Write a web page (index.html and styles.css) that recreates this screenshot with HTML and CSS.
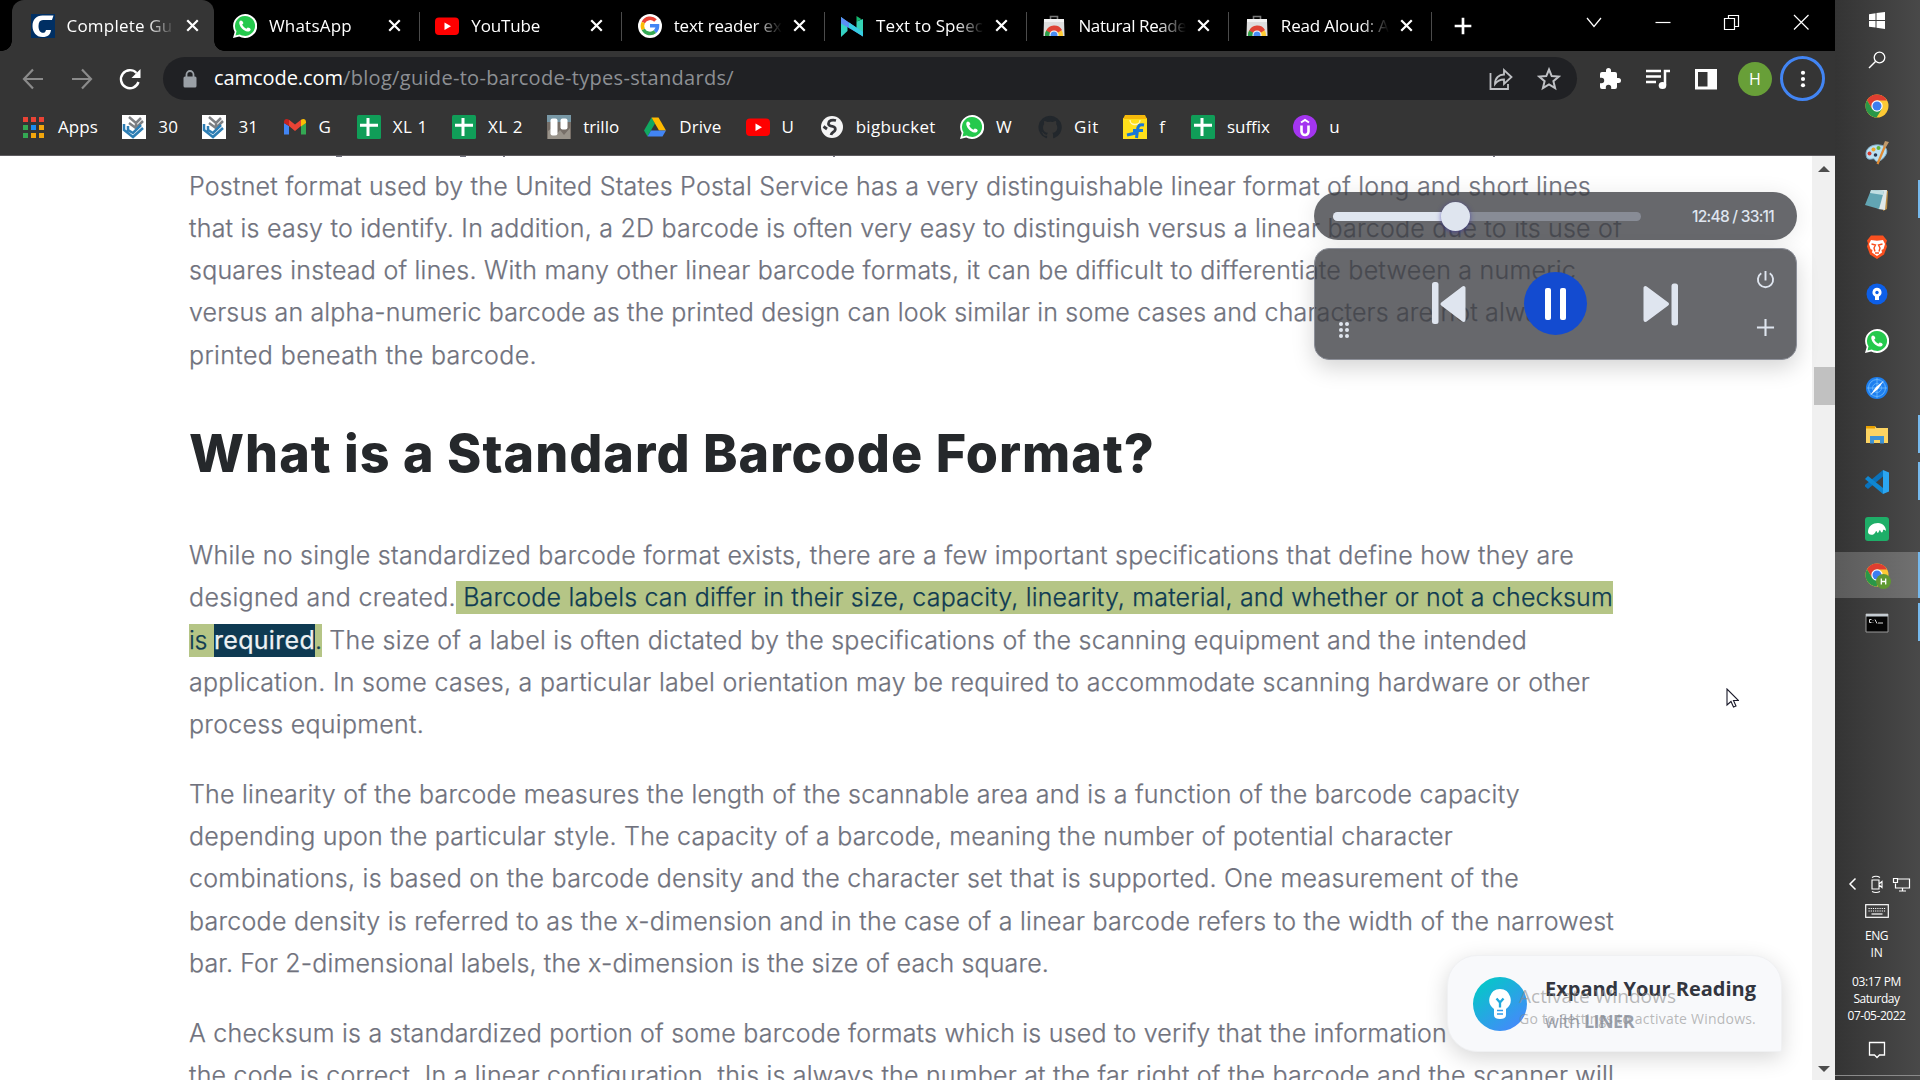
FILE: index.html
```html
<!DOCTYPE html>
<html lang="en">
<head>
<meta charset="utf-8">
<title>Complete Guide to Barcode Types</title>
<link rel="stylesheet" href="styles.css">
</head>
<body>
<svg class="defs" width="0" height="0">
  <symbol id="whatsapp" viewBox="0 0 24 24"><path d="M12 0a12 12 0 0 0-10.300 18L0 24l6.200-1.600A12 12 0 1 0 12 0z" fill="#fff"/><path d="M12 1.900a10 10 0 0 0-8.500 15.300L2.500 21.500l4.300-1.100A10 10 0 1 0 12 1.900z" fill="#25c94d"/><path d="M8 6.500c-1 0-2 1.300-1.700 3 .5 3.500 4.500 7.500 8 8 1.800.2 3.400-.9 3.400-2.300 0-.8-2.500-2-3-1.700l-1.200 1.300c-1.800-.6-3.700-2.400-4.300-4.200l1.100-1.200c.3-.5-.8-2.900-2.300-2.900z" fill="#fff"/></symbol>
  <symbol id="youtube" viewBox="0 0 24 24"><rect y="3.500" width="24" height="17.500" rx="4" fill="#f00"/><path d="M9.500 8.500v7.500l6.500-3.750z" fill="#fff"/></symbol>
  <symbol id="store" viewBox="0 0 24 24"><path d="M8.500 6V2.500h7V6" fill="none" stroke="#777" stroke-width="1.600"/><path d="M2 5h20l.5 17h-21z" fill="#dedede"/><path d="M2 5h20v3H2z" fill="#f2f2f2"/><clipPath id="bag"><path d="M1 5h22v17H1z"/></clipPath><g clip-path="url(#bag)"><circle cx="12" cy="21" r="9" fill="#fc3"/><path d="M12 21L4 17a9 9 0 0 1 16-1z" fill="#df4436"/><path d="M12 21L4.200 16.500A9 9 0 0 0 4 25z" fill="#2a9d4a"/><circle cx="12" cy="21" r="4.500" fill="#fff"/><circle cx="12" cy="21" r="3.500" fill="#4a8df5"/></g></symbol>
  <symbol id="chrome" viewBox="0 0 24 24"><circle cx="12" cy="12" r="11.500" fill="#fcc934"/><path d="M2 6.300A11.500 11.500 0 0 1 22 6.500H12L7 14.800z" fill="#df3e30"/><path d="M2 6.300A11.500 11.500 0 0 0 11.500 23.500L17 14.700 7.200 14.900z" fill="#2a9748"/><circle cx="12" cy="12" r="5.700" fill="#fff"/><circle cx="12" cy="12" r="4.500" fill="#3c7df0"/></symbol>
  <symbol id="sheet" viewBox="0 0 24 24"><rect width="24" height="24" rx="1.500" fill="#109d58"/><path d="M3 10.300h18M11 3v18" stroke="#fff" stroke-width="3"/></symbol>
  <symbol id="hand" viewBox="0 0 24 24"><path d="M0 0h24v24H0z" fill="#fff"/><path d="M7 2l7 6v5M7 8l7 5 7-7M14 8l5-5" fill="none" stroke="#7d7f82" stroke-width="2.500"/><path d="M2 9v6l9 7 10-9M6 11v4l5 3 8-8" fill="none" stroke="#2d7eb4" stroke-width="2.500"/></symbol>
  <symbol id="x" viewBox="0 0 24 24"><path d="M6.500 6.500l11 11m0-11l-11 11" stroke="currentColor" stroke-width="2.300"/></symbol>
</svg>

<div class="browser">
  <header class="tabs">
    <div class="tab active"><svg class="ico" viewBox="0 0 24 24"><path d="M0 0h24v24H0z" fill="#002f63"/><path d="M22.500 1.500h-11C5 1.500 1.500 6 1.500 12s3.500 11 10 11c5.500 0 8-2.500 8.500-7h-5c-.5 2-1.500 2.800-3 2.800-2.800 0-4.500-2.800-4.500-6.800 0-4 1.500-6 4.500-6H21z" fill="#fff"/></svg><span class="title"><b data-w="106">Complete Gu</b></span><svg class="x"><use href="#x"/></svg></div>
    <div class="tab"><svg class="ico"><use href="#whatsapp"/></svg><span class="title"><b data-w="83">WhatsApp</b></span><svg class="x"><use href="#x"/></svg></div>
    <div class="tab"><svg class="ico"><use href="#youtube"/></svg><span class="title"><b data-w="69">YouTube</b></span><svg class="x"><use href="#x"/></svg></div>
    <div class="tab"><svg class="ico" viewBox="0 0 24 24"><circle cx="12" cy="12" r="12" fill="#fff"/><g fill="none" stroke-width="3.600"><path d="M17.500 6.500A7.600 7.600 0 0 0 5.300 8.500" stroke="#ea4335"/><path d="M5.300 8.500a7.600 7.600 0 0 0 0 7" stroke="#fbbc05"/><path d="M5.300 15.500A7.600 7.600 0 0 0 17 17.600" stroke="#34a853"/><path d="M17 17.600a7.600 7.600 0 0 0 2.500-5.800H12" stroke="#4285f4"/></g></svg><span class="title"><b data-w="108">text reader ex</b></span><svg class="x"><use href="#x"/></svg></div>
    <div class="tab"><svg class="ico" viewBox="0 0 24 24"><path d="M1 3l6.500 5v9L1 23z" fill="#35d3c4"/><path d="M16.500 7.500L23 5v17l-6.500-5z" fill="#35d3b4"/><path d="M1 3l22 15v4.500L14 17 1 9.500z" fill="#5b8ff5"/><path d="M9 8.500L23 18v4.500l-14-9z" fill="#35cfe0"/><path d="M16.500 2l5 3.200-5 2.500z" fill="#15b86e"/></svg><span class="title"><b data-w="107">Text to Speec</b></span><svg class="x"><use href="#x"/></svg></div>
    <div class="tab"><svg class="ico"><use href="#store"/></svg><span class="title"><b data-w="108">Natural Reade</b></span><svg class="x"><use href="#x"/></svg></div>
    <div class="tab"><svg class="ico"><use href="#store"/></svg><span class="title"><b data-w="108">Read Aloud: A</b></span><svg class="x"><use href="#x"/></svg></div>
    <svg class="plus" viewBox="0 0 24 24"><path d="M12 2v20M2 12h20" stroke="#fff" stroke-width="3.200"/></svg>
    <div class="winctl">
      <svg viewBox="0 0 24 24"><path d="M5 8l7 8.500L19 8" fill="none" stroke="#fff" stroke-width="1.200"/></svg>
      <svg viewBox="0 0 24 24"><path d="M4.500 12.500h15" stroke="#fff" stroke-width="1.200"/></svg>
      <svg viewBox="0 0 24 24"><path d="M4.500 8.500h10v11h-10zM8.500 8V5.500h10v11H15" fill="none" stroke="#fff" stroke-width="1.200"/></svg>
      <svg viewBox="0 0 24 24"><path d="M5 5l14.500 14.500m0-14.500L5 19.500" stroke="#fff" stroke-width="1.200"/></svg>
    </div>
  </header>

  <nav class="toolbar">
    <svg class="nav dim" viewBox="0 0 24 24"><path d="M22 12H3M12 2.500L3 12l9 9.500" fill="none" stroke="currentColor" stroke-width="2.200"/></svg>
    <svg class="nav dim" viewBox="0 0 24 24"><path d="M2 12h19M12 2.500l9 9.500-9 9.500" fill="none" stroke="currentColor" stroke-width="2.200"/></svg>
    <svg class="nav" viewBox="0 0 24 24"><path d="M20.500 15A9 9 0 1 1 18.500 6" fill="none" stroke="currentColor" stroke-width="2.400"/><path d="M22.500 2v9h-9z" fill="currentColor"/></svg>
    <div class="omnibox">
      <svg class="lock" viewBox="0 0 14 18"><rect x="0.500" y="6.500" width="13" height="11" rx="1.500" fill="#9aa0a6"/><path d="M3.500 7V4.500a3.500 3.500 0 0 1 7 0V7" fill="none" stroke="#9aa0a6" stroke-width="1.800"/></svg>
      <span class="url"><b data-w="129">camcode.com</b><i data-w="391">/blog/guide-to-barcode-types-standards/</i></span>
      <svg class="act" viewBox="0 0 24 24"><path d="M1.500 6v16h17.500v-5" fill="none" stroke="currentColor" stroke-width="1.800"/><path d="M6 17c0-6 4-9.500 9-9.500V3l7.500 7-7.500 7v-4.500c-4 0-6.500 1-9 4.500z" fill="none" stroke="currentColor" stroke-width="1.800"/></svg>
      <svg class="act" viewBox="0 0 24 24"><path d="M12 2.500l2.700 6.600 7.100.5-5.400 4.600 1.700 7L12 17.400l-6.100 3.800 1.700-7L2.200 9.600l7.100-.5z" fill="none" stroke="currentColor" stroke-width="2"/></svg>
    </div>
    <svg class="ext" viewBox="0 0 24 24"><path d="M20.500 11H19V7a2 2 0 0 0-2-2h-4V3.500a2.500 2.500 0 0 0-5 0V5H4a2 2 0 0 0-2 2v3.800h1.500a2.700 2.700 0 0 1 0 5.400H2V20a2 2 0 0 0 2 2h3.800v-1.500a2.700 2.700 0 0 1 5.400 0V22H17a2 2 0 0 0 2-2v-4h1.500a2.500 2.500 0 0 0 0-5z" fill="#fff"/></svg>
    <svg class="ext" viewBox="0 0 24 24"><path d="M0 4h15M0 9.500h15M0 15h10" stroke="#fff" stroke-width="2.300"/><path d="M19 18V4h5" fill="none" stroke="#fff" stroke-width="2.500"/><ellipse cx="16.500" cy="18.500" rx="3.800" ry="3.500" fill="#fff"/></svg>
    <svg class="ext" viewBox="0 0 24 24"><path d="M1 2h22v20.500H1zM4 5v14.500h9.500V5z" fill="#fff" fill-rule="evenodd"/></svg>
    <span class="avatar">H</span>
    <span class="menu"><svg viewBox="0 0 24 24"><g fill="#fff"><circle cx="12" cy="4.500" r="2.500"/><circle cx="12" cy="12" r="2.500"/><circle cx="12" cy="19.500" r="2.500"/></g></svg></span>
  </nav>

  <nav class="bookmarks">
    <a><svg viewBox="0 0 24 24"><path d="M1 2h5v5H1zm8 0h5v5H9zm8 0h5v5h-5z" fill="#ea4335"/><path d="M1 10h5v5H1z" fill="#34a853"/><path d="M9 10h5v5H9z" fill="#1a8cf0"/><path d="M17 10h5v5h-5zM9 18h5v5H9zm8 0h5v5h-5z" fill="#f2a60c"/><path d="M1 18h5v5H1z" fill="#34a853"/></svg><b data-w="40">Apps</b></a>
    <a><svg><use href="#hand"/></svg><b data-w="20">30</b></a>
    <a><svg><use href="#hand"/></svg><b data-w="20">31</b></a>
    <a><svg viewBox="0 0 24 24"><path d="M1 8v11.500h5V11z" fill="#4285f4"/><path d="M18 11v8.500h5V8z" fill="#34a853"/><path d="M1 7c0-3 2.500-4 5-2.200V11L1 8z" fill="#c5221f"/><path d="M6 4.800l6 4.700 6-4.700V11l-6 5-6-5z" fill="#ea4335"/><path d="M18 4.800C20.500 3 23 4 23 7v1l-5 3.500z" fill="#fbbc04"/></svg><b data-w="14">G</b></a>
    <a><svg><use href="#sheet"/></svg><b data-w="35">XL 1</b></a>
    <a><svg><use href="#sheet"/></svg><b data-w="35">XL 2</b></a>
    <a><svg viewBox="0 0 24 24"><path d="M0 0h24v24H0z" fill="#776f68"/><path d="M0 0h24v7H0z" fill="#7898a6"/><path d="M1 16l4-3 3 8 5-6 4 5 6-7v11H1z" fill="#99938a"/><rect x="3.500" y="3.500" width="7" height="17" rx="2" fill="#fff"/><rect x="13.500" y="3.500" width="7" height="11" rx="2" fill="#fff"/></svg><b data-w="36">trillo</b></a>
    <a><svg viewBox="0 0 24 24"><path d="M8.500 2.500L1 15.500l3.500 6L12 8.500z" fill="#11a861"/><path d="M8.500 2.500h7L23 15.500h-7z" fill="#ffba00"/><path d="M8 15.500h15l-3.500 6h-15z" fill="#4285f4"/></svg><b data-w="42">Drive</b></a>
    <a><svg><use href="#youtube"/></svg><b data-w="14">U</b></a>
    <a><svg viewBox="0 0 24 24"><circle cx="12" cy="12" r="11" fill="#f5f5f5"/><path d="M16 5.500c-4-1-7 0-7.500 2.500-.5 2 1.500 3 4 3.300 3 .5 3.500 3 2 4.700-1.500 1.500-3 2-3.500 4M3.500 11.500l3.500 2.500" fill="none" stroke="#35363a" stroke-width="2.800"/></svg><b data-w="80">bigbucket</b></a>
    <a><svg><use href="#whatsapp"/></svg><b data-w="18">W</b></a>
    <a><svg viewBox="0 0 24 24"><path d="M12 .8a11.500 11.500 0 0 0-3.700 22.400c.6.100.8-.2.800-.5v-2c-3.200.6-4-1.500-4.400-2.300-.4-.7-.8-1-1.400-1.400 1.500-.4 2.300 1 2.700 1.600 1 1.500 2.400 1.200 3.200.8.100-.8.500-1.300.8-1.600C7.300 17.500 5 16.300 5 12.200c0-1.300.4-2.300 1.200-3.200-.1-.3-.5-1.500.1-3.100 0 0 1-.3 3.100 1.200a11 11 0 0 1 5.500 0C17 5.600 18 5.900 18 5.900c.6 1.600.2 2.800.1 3.100.8.800 1.200 1.900 1.200 3.200 0 4.200-2.500 5.300-5 5.600.4.300.8 1 .8 2.100v2.800c0 .3.200.6.800.5A11.500 11.500 0 0 0 12 .8z" fill="#22272c"/></svg><b data-w="25">Git</b></a>
    <a><svg viewBox="0 0 24 24"><path d="M0 3h24v21H0z" fill="#ffe01b"/><path d="M2 0h20l2 4H0z" fill="#f5b90a"/><path d="M7 5c0 6 10 6 10 0" fill="none" stroke="#fff7c0" stroke-width="1.300"/><path d="M21 10c-5-1-6 1-6.500 5l-1 8M10 15.500h10M4 20l9-2" fill="none" stroke="#1877d8" stroke-width="3"/></svg><b data-w="7.500">f</b></a>
    <a><svg><use href="#sheet"/></svg><b data-w="43">suffix</b></a>
    <a class="last"><svg viewBox="0 0 24 24"><circle cx="12" cy="12" r="12" fill="#a435f0"/><path d="M8 7.500l4-2.500 4 2.500" fill="none" stroke="#fff" stroke-width="2"/><path d="M8.500 10.500v6a3.500 3.500 0 0 0 7 0v-6" fill="none" stroke="#fff" stroke-width="2.600"/></svg><b data-w="10">u</b></a>
  </nav>

  <div class="view">
    <main class="article">
      <div class="scrolled"></div>
      <p>
        <span class="line" data-w="1402">Postnet format used by the United States Postal Service has a very distinguishable linear format of long and short lines</span>
        <span class="line" data-w="1433">that is easy to identify. In addition, a 2D barcode is often very easy to distinguish versus a linear barcode due to its use of</span>
        <span class="line" data-w="1387">squares instead of lines. With many other linear barcode formats, it can be difficult to differentiate between a numeric</span>
        <span class="line" data-w="1377">versus an alpha-numeric barcode as the printed design can look similar in some cases and characters are not always</span>
        <span class="line" data-w="348">printed beneath the barcode.</span>
      </p>
      <h2><span data-w="966">What is a Standard Barcode Format?</span></h2>
      <p>
        <span class="line" data-w="1385">While no single standardized barcode format exists, there are a few important specifications that define how they are</span>
        <span class="line"><span data-w="267">designed and created.</span><mark data-w="1157"> Barcode labels can differ in their size, capacity, linearity, material, and whether or not a checksum</mark></span>
        <span class="line"><mark data-w="25">is </mark><mark class="word" data-w="101">required</mark><mark data-w="7">.</mark><span data-w="1205"> The size of a label is often dictated by the specifications of the scanning equipment and the intended</span></span>
        <span class="line" data-w="1401">application. In some cases, a particular label orientation may be required to accommodate scanning hardware or other</span>
        <span class="line" data-w="235">process equipment.</span>
      </p>
      <p>
        <span class="line" data-w="1331">The linearity of the barcode measures the length of the scannable area and is a function of the barcode capacity</span>
        <span class="line" data-w="1264">depending upon the particular style. The capacity of a barcode, meaning the number of potential character</span>
        <span class="line" data-w="1330">combinations, is based on the barcode density and the character set that is supported. One measurement of the</span>
        <span class="line" data-w="1425">barcode density is referred to as the x-dimension and in the case of a linear barcode refers to the width of the narrowest</span>
        <span class="line" data-w="860">bar. For 2-dimensional labels, the x-dimension is the size of each square.</span>
      </p>
      <p>
        <span class="line" data-w="1258">A checksum is a standardized portion of some barcode formats which is used to verify that the information</span>
        <span class="line" data-w="1425">the code is correct. In a linear configuration, this is always the number at the far right of the barcode and the scanner will</span>
      </p>
    </main>
    <aside class="scrollbar"><i class="up"></i><i class="thumb"></i><i class="down"></i></aside>
  </div>
</div>

<aside class="taskbar">
  <div class="apps">
    <span class="app short"><svg viewBox="0 0 24 24"><path d="M4 6.200l6.500-.9V12H4zM11.500 5.100L20 4v8h-8.500zM4 13h6.500v6.600L4 18.700zM11.500 13H20v7.900l-8.500-1.200z" fill="#fff"/></svg></span>
    <span class="app short2"><svg viewBox="0 0 24 24"><circle cx="14.500" cy="9.500" r="5.300" fill="none" stroke="#fff" stroke-width="1.300"/><path d="M10.500 13.500L4 20" stroke="#fff" stroke-width="1.500"/></svg></span>
    <span class="app"><svg><use href="#chrome"/></svg></span>
    <span class="app"><svg viewBox="0 0 24 24"><path d="M2 17C-2 8 7 3 14 4c7 0 10 6 6 11-3 5-9 7-10 4s-5 1-8-2z" fill="#b9dff2" stroke="#7eaec9"/><circle cx="4.500" cy="12.500" r="2" fill="#d53a30"/><circle cx="8.500" cy="8.500" r="2" fill="#eda52c"/><circle cx="13.500" cy="7" r="2" fill="#5fb339"/><circle cx="10.500" cy="14" r="1.800" fill="#28364f"/><path d="M12.500 23L20 5" stroke="#e08b34" stroke-width="2.200"/><path d="M18 5l2-5 4 1-3 5z" fill="#c19a6b"/></svg></span>
    <span class="app run"><svg viewBox="0 0 24 24"><path d="M20 2l3 1-1 18-4 2z" fill="#b98d45"/><path d="M7 2h15l-2 20-7-1z" fill="#dfe8e8"/><path d="M6 2l13 1-5 18-14-4z" fill="#62a5b3"/><path d="M6 2l13 1-1 4-13-2z" fill="#c1dee2"/></svg></span>
    <span class="app"><svg viewBox="0 0 24 24"><path d="M6 .5h12l4 5-1 3 1 3-3 8-7 4.500-7-4.500-3-8 1-3-1-3z" fill="#f9501f"/><path d="M6 5l6 .8L18 5l2 4-1.500 5-2 1 .5 2.500-5 3.500-5-3.500.5-2.500-2-1L4 9z" fill="#fff"/><path d="M6.500 9l4 1-1.500 3 1 3.500M17.500 9l-4 1 1.500 3-1 3.500M10 18h4" fill="none" stroke="#f9501f" stroke-width="1.400"/></svg></span>
    <span class="app"><svg viewBox="0 0 24 24"><circle cx="12" cy="12" r="10.500" fill="#0d5fe8"/><path d="M12 5.800a4.600 4.600 0 0 0-2 8.700V18h4v-3.500a4.600 4.600 0 0 0-2-8.700z" fill="#fff"/><circle cx="12" cy="10.500" r="1.700" fill="#0d5fe8"/></svg></span>
    <span class="app"><svg><use href="#whatsapp"/></svg></span>
    <span class="app"><svg viewBox="0 0 24 24"><circle cx="12" cy="12" r="11" fill="#1d7ff0"/><g fill="none" stroke="#62b2fb"><circle cx="12" cy="12" r="8.500"/><circle cx="12" cy="12" r="4.500"/><path d="M12 2v20M2 12h20"/></g><path d="M19 4.500l-6 8.500L5 19.500 11 11z" fill="#fff"/></svg></span>
    <span class="app run"><svg viewBox="0 0 24 24"><path d="M1 3h9l1.500 2H23v15H1z" fill="#fcd462"/><path d="M1 3h9v2.500H1z" fill="#e8a000"/><path d="M5 20.500V13h14v7.500h-4V17H9v3.500z" fill="#3f93d4"/></svg></span>
    <span class="app run"><svg viewBox="0 0 24 24"><path d="M18 0v6.500L3 19 0 16.500V15z" fill="#0a72bb"/><path d="M0 9l3-3 15 12v6z" fill="#0f87d2"/><path d="M18 0l6 2.500v19L18 24z" fill="#2ba6f2"/></svg></span>
    <span class="app"><svg viewBox="0 0 24 24"><rect width="24" height="24" rx="3" fill="#1eae68"/><path d="M3 15C3 9 8 6 13 6s8 4 8 8c-1-1-2-1.500-3-1 0 2-1 3-2 2l-1-2c-1 0-1 3-2.500 3l-1-2c-1 0-1 2-2.500 3-3 2-6 0-6-2z" fill="#fff"/></svg></span>
    <span class="app run current"><svg viewBox="0 0 26 26"><use href="#chrome" width="24" height="24"/><circle cx="18.500" cy="18.500" r="7.500" fill="#5f9832"/><path d="M16.300 15.500v6M20.700 15.500v6M16.300 18.500h4.400" stroke="#fff" stroke-width="1.300"/></svg></span>
    <span class="app run"><svg viewBox="0 0 24 24"><path d="M1 3h22v18H1z" fill="#050505" stroke="#9a9a9a"/><path d="M1 3h22v2.500H1z" fill="#c5ccd2"/><path d="M6.500 8.500h-2v3h2M8 9v.5m0 2v.5M10 8.500l2 4M13 12h5" fill="none" stroke="#ddd"/></svg></span>
  </div>
  <div class="tray">
    <div class="trayrow">
      <svg viewBox="0 0 20 20"><path d="M12.500 4.500L7 10l5.500 5.500" fill="none" stroke="#fff" stroke-width="1.500"/></svg>
      <svg viewBox="0 0 20 20"><path d="M5 6h7v9H5zM12 10l3-2.500v6L12 11zM5 3.500q4-2.500 8 0M5 17.500q4 2 8 0" fill="none" stroke="#fff" stroke-width="1.100"/></svg>
      <svg viewBox="0 0 20 20"><path d="M6 5h12.500v9H4.500V9.500M2.500 4.500h4v4h-4zM11.500 14v3M8 17h7" fill="none" stroke="#fff" stroke-width="1.200"/></svg>
    </div>
    <svg class="kbd" viewBox="0 0 24 14"><rect x=".7" y=".7" width="22.600" height="12.600" fill="none" stroke="#fff" stroke-width="1.200"/><path d="M3.500 4.500h17M3.500 7h17" stroke="#fff" stroke-width="1.200" stroke-dasharray="1.200 1"/><path d="M6.500 10h11" stroke="#fff" stroke-width="1.200"/></svg>
    <div class="lang"><b data-w="23">ENG</b><b data-w="12">IN</b></div>
    <div class="clock"><b data-w="49">03:17 PM</b><b data-w="46">Saturday</b><b data-w="58">07-05-2022</b></div>
    <svg class="note" viewBox="0 0 18 18"><path d="M1.500 1.500h15v12.500h-5L9 16.500 6.500 14h-5z" fill="none" stroke="#fff" stroke-width="1.300"/></svg>
    <div class="peek"></div>
  </div>
</aside>

<section class="player">
  <div class="seek">
    <div class="track"><div class="played"></div><div class="knob"></div></div>
    <span class="time" data-w="82">12:48 / 33:11</span>
  </div>
  <div class="controls">
    <svg class="grip" viewBox="0 0 12 18"><g fill="#dfe5ef"><circle cx="3" cy="3" r="2"/><circle cx="9" cy="3" r="2"/><circle cx="3" cy="9" r="2"/><circle cx="9" cy="9" r="2"/><circle cx="3" cy="15" r="2"/><circle cx="9" cy="15" r="2"/></g></svg>
    <svg class="skip" viewBox="0 0 34 44"><rect width="6.500" height="42" y="0" rx="2.500" fill="#dfe5ef"/><path d="M10.500 22L31.500 6v32z" fill="#dfe5ef" stroke="#dfe5ef" stroke-width="4" stroke-linejoin="round"/></svg>
    <span class="pause"><i></i><i></i></span>
    <svg class="skip next" viewBox="0 0 36 44"><rect x="28.500" width="6.500" height="42" y="1.500" rx="2.500" fill="#dfe5ef"/><path d="M24 22L2.500 6v32z" fill="#dfe5ef" stroke="#dfe5ef" stroke-width="4" stroke-linejoin="round"/></svg>
    <div class="side">
      <svg viewBox="0 0 20 20"><path d="M5.500 3.500a8 8 0 1 0 9 0M10 1v10" fill="none" stroke="#dfe5ef" stroke-width="2"/></svg>
      <svg viewBox="0 0 20 20"><path d="M10 1v18M1 10h18" stroke="#dfe5ef" stroke-width="2.200"/></svg>
    </div>
  </div>
</section>

<section class="liner">
  <svg class="bulb" viewBox="0 0 54 54"><defs><linearGradient id="lg" x1="0.100" y1="0" x2="0.900" y2="1"><stop offset="0" stop-color="#00ccc4"/><stop offset="1" stop-color="#4a84ff"/></linearGradient></defs><circle cx="27" cy="27" r="27" fill="url(#lg)"/><path d="M27 12a11 11 0 0 0-6 20v6q0 4 6 4t6-4v-6a11 11 0 0 0-6-20z" fill="#fff"/><path d="M23.500 21.500l3.500 4 3.500-4M27 25v5.500" fill="none" stroke="#1fa9dd" stroke-width="2.300"/><path d="M24 33.500h6M24 37h6" stroke="#2f9cec" stroke-width="1.300"/></svg>
  <div class="promo"><b data-w="211">Expand Your Reading</b><span><i data-w="39">with </i><strong data-w="50">LINER</strong></span></div>
</section>

<div class="watermark"><span class="w1" data-w="157">Activate Windows</span><span class="w2" data-w="237">Go to Settings to activate Windows.</span></div>

<svg class="cursor" viewBox="0 0 13 20"><path d="M1 1v16l4-3.500 2.500 5.500 2.500-1-2.500-5.500h5z" fill="#fff" stroke="#1a1a2a" stroke-width="1.100"/></svg>
<script src="fit.js"></script>
</body>
</html>
```
FILE: styles.css
```css
* { box-sizing: border-box; }
body { margin: 0; width: 1920px; height: 1080px; overflow: hidden; display: flex; background: #fff; font-family: "Open Sans", "Noto Sans", sans-serif; position: relative; }
b, i { font-weight: 400; font-style: normal; }
[data-w] { white-space: pre; }
svg { flex: none; display: block; }
.defs { position: absolute; }

.browser { width: 1835px; height: 1080px; display: flex; flex-direction: column; flex: none; }

/* tab strip */
.tabs { height: 51px; background: #000; display: flex; align-items: center; padding-left: 12px; flex: none; }
.tab { width: 202.400px; height: 51px; display: flex; align-items: center; padding-left: 18.500px; color: #fff; font-size: 17px; position: relative; flex: none; }
.tab:not(.active)::after { content: ""; position: absolute; right: -3px; top: 12px; width: 1px; height: 29px; background: #4b4b4b; }
.tab.active { background: #353535; border-radius: 12px 12px 0 0; }
.tab.active::before, .tab.active::after { content: ""; position: absolute; bottom: 0; width: 10px; height: 10px; }
.tab.active::before { left: -10px; background: radial-gradient(circle at 0 0, #000 9.500px, #353535 10px); }
.tab.active::after { right: -10px; background: radial-gradient(circle at 100% 0, #000 9.500px, #353535 10px); }
.ico { width: 24px; height: 24px; }
.title { width: 108px; margin-left: 12px; overflow: hidden; -webkit-mask: linear-gradient(90deg, #000 74%, transparent 100%); mask: linear-gradient(90deg, #000 74%, transparent 100%); }
.title b { display: inline-block; }
.tab .x { width: 23px; height: 23px; margin-left: 6px; color: #fff; }
.plus { width: 20px; height: 20px; margin-left: 24px; }
.winctl { margin-left: 109px; height: 43px; align-self: flex-start; display: flex; align-items: center; gap: 45px; }
.winctl svg { width: 24px; height: 24px; }

/* toolbar */
.toolbar { height: 56px; background: #353535; display: flex; align-items: center; padding-left: 21px; padding-bottom: 1px; flex: none; }
.nav { width: 24px; height: 24px; margin-right: 24.500px; color: #fff; }
.nav.dim { color: #8b8b8b; }
.omnibox { width: 1414px; height: 43px; border-radius: 22px; background: #202124; display: flex; align-items: center; padding: 0 16px 0 20px; margin-left: -3.500px; margin-right: 21px; }
.lock { width: 14px; height: 18px; }
.url { flex: 1; margin-left: 17px; font-size: 20px; line-height: 26px; margin-top: -1px; color: #8d9094; display: flex; }
.url b { color: #fff; }
.act { width: 24px; height: 24px; margin-left: 24px; color: #bfc1c5; }
.ext { width: 24px; height: 24px; margin-right: 24px; }
.avatar { width: 34px; height: 34px; border-radius: 50%; background: #689f38; color: #fff; display: flex; align-items: center; justify-content: center; font-size: 16px; margin-right: 8px; margin-left: -4px; }
.menu { width: 45px; height: 45px; border: 3px solid #4285f4; border-radius: 50%; display: flex; align-items: center; justify-content: center; }
.menu svg { width: 20px; height: 24px; }

.bookmarks { height: 49px; background: #353535; border-bottom: 1px solid #5e5c60; display: flex; gap: 24.200px; padding: 0 0 9px 22px; flex: none; }
.bookmarks a { display: flex; align-items: center; gap: 12px; color: #fff; font-size: 17px; }
.bookmarks a.last { margin-left: -1px; }
.bookmarks svg { width: 24px; height: 24px; }

/* page */
.view { flex: 1; display: flex; overflow: hidden; min-height: 0; }
.article { flex: 1; padding-left: 189px; font-family: Inter, "Open Sans", sans-serif; color: #70727d; overflow: hidden; }
/* descenders of the line that is scrolled under the toolbar */
.scrolled { height: 8.600px; background: linear-gradient(#70727d, #70727d) 147px 0 / 6px 1px no-repeat, linear-gradient(#70727d, #70727d) 271px 0 / 6px 1px no-repeat, linear-gradient(#70727d, #70727d) 314px 0 / 2px 1px no-repeat, linear-gradient(#70727d, #70727d) 644px 0 / 2px 1px no-repeat, linear-gradient(#70727d, #70727d) 1304px 0 / 2px 1px no-repeat; }
.article p { margin: 0 0 27.500px; font-size: 25px; font-weight: 300; line-height: 42.250px; -webkit-text-stroke: 0.250px currentColor; }
.line { display: block; width: max-content; white-space: pre; }
.article h2 { margin: 48.500px 0 49.800px; font-size: 52px; font-weight: 800; line-height: 60px; color: #25282b; }
.article h2 span { display: inline-block; }
mark { background: #b5c586; color: #0f3b52; padding: 1px 0 2px; }
mark.word { background: #0e3a52; color: #eef2f4; font-weight: 400; }

.scrollbar { width: 23px; background: #f0f0f0; display: flex; flex-direction: column; align-items: center; }
.scrollbar .up { border: 6px solid transparent; border-top: 0; border-bottom: 6px solid #4d4d4d; margin-top: 10px; }
.scrollbar .thumb { width: 21px; height: 38px; background: #c1c1c1; margin: 195px 0 auto 2px; }
.scrollbar .down { border: 6px solid transparent; border-bottom: 0; border-top: 6px solid #4d4d4d; margin-bottom: 8px; }

/* taskbar */
.taskbar { width: 85px; background: linear-gradient(90deg, #343434, #494949); display: flex; flex-direction: column; justify-content: space-between; color: #fff; flex: none; }
.apps { display: flex; flex-direction: column; }
.app { height: 47px; display: flex; align-items: center; justify-content: center; position: relative; padding-right: 2px; }
.app.short { height: 40px; }
.app.short2 { height: 42px; }
.app svg { width: 24px; height: 24px; }
.app.short2 svg { margin-top: -2px; }
.app.run::after { content: ""; position: absolute; right: 0; top: 4px; width: 2px; height: 38px; background: #76b9ed; }
.app.current { background: linear-gradient(90deg, #5b5b5b, #717171); height: 46px; margin-bottom: 1px; }
.app.current::after { top: 0; height: 46px; }
.app.current svg { width: 26px; height: 26px; margin-left: 2px; margin-top: 2px; }
.tray { display: flex; flex-direction: column; align-items: center; font-size: 12px; line-height: 17px; height: 206px; }
.tray > :not(.peek) { margin-right: 2px; }
.trayrow { display: flex; gap: 4px; }
.trayrow svg { width: 20px; height: 20px; }
.kbd { width: 24px; height: 14px; margin-top: 10px; }
.lang, .clock { display: flex; flex-direction: column; align-items: center; margin-top: 9px; }
.clock { margin-top: 12px; }
.note { width: 18px; height: 18px; margin-top: 17px; }
.peek { width: 100%; height: 5px; border-top: 1px solid #8a8a8a; margin-top: auto; }

/* reader overlay */
.player { position: absolute; left: 1314px; top: 192px; width: 483px; display: flex; flex-direction: column; gap: 8px; }
.seek, .controls { background: rgba(60, 61, 66, 0.780); box-shadow: 0 8px 22px rgba(0, 0, 0, 0.170); }
.seek { height: 48px; border-radius: 24px; display: flex; align-items: center; padding-left: 19px; box-shadow: 0 2px 22px rgba(0, 0, 0, 0.090); }
.track { width: 308px; height: 9px; border-radius: 5px; background: #888c96; position: relative; }
.played { width: 122px; height: 9px; border-radius: 5px; background: #dfe5ef; }
.knob { position: absolute; left: 108px; top: -10px; width: 29px; height: 29px; border-radius: 50%; background: #dfe5ef; box-shadow: 0 1px 5px rgba(50, 40, 160, 0.600); }
.time { margin-left: 51px; color: #dfe5ef; font: 500 15.500px Inter, sans-serif; }
.controls { height: 112px; border-radius: 15px; border: 1px solid #8c8f98; display: flex; align-items: center; padding-bottom: 1px; }
.grip { width: 12px; height: 18px; margin: 52px 0 0 23px; }
.skip { width: 34px; height: 44px; margin-left: 81.500px; }
.next { width: 36px; margin-left: 56px; }
.pause { width: 63px; height: 63px; border-radius: 50%; background: #134bd0; display: flex; align-items: center; justify-content: center; gap: 9px; margin-left: 58px; }
.pause i { width: 6px; height: 32px; border-radius: 2px; background: #fff; }
.side { margin-left: 77px; display: flex; flex-direction: column; gap: 29px; }
.side svg { width: 19px; height: 19px; }

/* LINER card */
.liner { position: absolute; left: 1447px; top: 955px; width: 335px; height: 97px; border-radius: 30px 30px 2px 30px; background: #f8f9fb; border: 1px solid #f0f1f3; box-shadow: 0 6px 22px rgba(0, 0, 0, 0.160); display: flex; align-items: center; padding-left: 25px; }
.bulb { width: 54px; height: 54px; }
.promo { margin: 2px 0 0 18px; display: flex; flex-direction: column; line-height: 33px; color: #9aa0ab; font-size: 18px; }
.promo b { font-weight: 700; font-size: 20px; color: #33363f; }
.promo strong { font-weight: 700; }
.watermark { position: absolute; left: 1519px; top: 984px; display: flex; flex-direction: column; align-items: flex-start; color: rgba(140, 140, 140, 0.600); }
.w1 { font-size: 19px; line-height: 25px; }
.w2 { font-size: 14px; line-height: 20px; }
.cursor { position: absolute; left: 1726px; top: 687.500px; width: 13px; height: 20px; }
```
FILE: fit.js
```js
// Tracks every measured label so that it takes the width set in data-w.
document.fonts.ready.then(function () {
  document.querySelectorAll('[data-w]').forEach(function (el) {
    var range = document.createRange();
    range.selectNodeContents(el);
    var natural = range.getBoundingClientRect().width;
    el.style.letterSpacing = (Number(el.dataset.w) - natural) / el.textContent.length + 'px';
  });
});
```
